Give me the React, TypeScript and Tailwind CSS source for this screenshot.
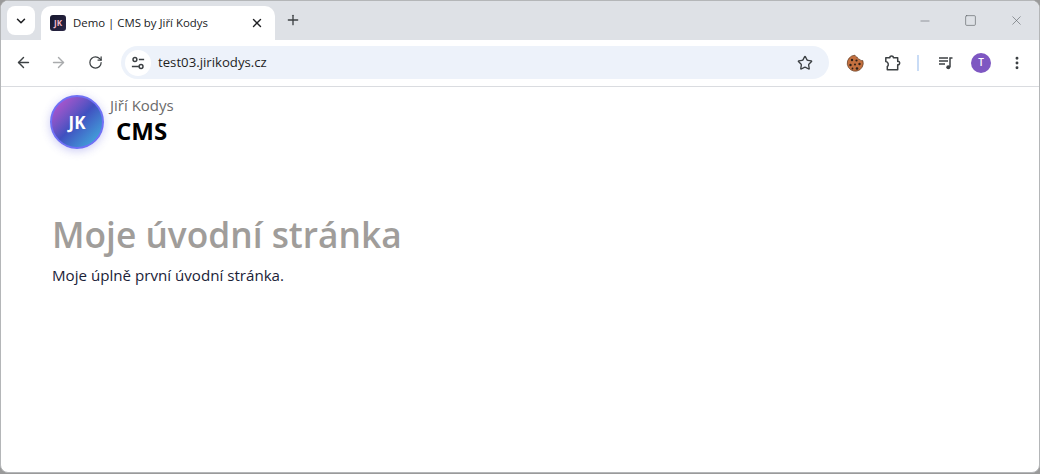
import { ArrowLeft, ArrowRight, RotateCw, ChevronDown, X, Plus, Minus, Square, Star, MoreVertical } from 'lucide-react';

const ui = { fontFamily: '"Open Sans", "Noto Sans", sans-serif' };

const SiteInfoIcon = () => (
  <svg width="14" height="14" viewBox="0 0 16 16" fill="none" stroke="#3c4043" strokeWidth="1.7">
    <circle cx="4.5" cy="4" r="2.200" />
    <path d="M9 4h6" />
    <circle cx="11.500" cy="12" r="2.200" />
    <path d="M1 12h8" />
  </svg>
);

const CookieIcon = () => (
  <svg width="18" height="18" viewBox="0 0 18 18">
    <path d="M9 1.2c.4 1.300 1.300 1.900 2.300 2 .2 1.300 1.200 2.200 2.500 2.200.5 1 1.400 1.300 3 1.200A8 8 0 1 1 9 1.200z" fill="#c4703f" stroke="#5f3a20" strokeWidth="0.7" />
    <circle cx="6" cy="6" r="1.200" fill="#2e2018" />
    <circle cx="10.500" cy="6.500" r="1.100" fill="#2e2018" />
    <circle cx="4.500" cy="11" r="1.200" fill="#2e2018" />
    <circle cx="9" cy="10.500" r="1" fill="#2e2018" />
    <circle cx="13.500" cy="10" r="1.200" fill="#2e2018" />
    <circle cx="11" cy="14.500" r="1.300" fill="#2e2018" />
    <circle cx="6.500" cy="14.500" r="0.900" fill="#2e2018" />
  </svg>
);

const ExtensionIcon = () => (
  <svg width="18" height="18" viewBox="0 0 18 18" fill="none" stroke="#3c4043" strokeWidth="1.500" strokeLinejoin="round">
    <path d="M1.800 3.700h4.100c-.3-2.300 3.700-2.300 3.400 0h4.400v3.700c2.600-.4 2.600 3.800 0 3.400v5H3.300v-3.300c1.500-.8 1.500-4.600-1.500-5.100z" />
  </svg>
);

const MediaIcon = () => (
  <svg width="16" height="16" viewBox="0 0 16 16" fill="none" stroke="#3c4043" strokeWidth="1.300">
    <path d="M2 3h9M2 6h9M2 9h6" />
    <path d="M13 12V3h2.500" strokeWidth="1.500" />
    <circle cx="11.300" cy="12.300" r="2" fill="#3c4043" stroke="none" />
  </svg>
);

export default function App() {
  return (
    <div className="h-[474px] w-[1040px] overflow-hidden bg-[#9a9a9a]" style={ui}>
      <div className="flex h-[473px] w-full flex-col overflow-hidden rounded-[8px] border border-[#b4b6b8] bg-white">
        {/* Tab strip */}
        <div className="flex h-[39px] shrink-0 items-end bg-[#dee1e6] pl-[6px]">
          <div className="mb-[5px] flex h-[29px] w-[28px] items-center justify-center rounded-[8px] bg-white">
            <ChevronDown size={14} strokeWidth={2.6} color="#202124" />
          </div>
          <div className="ml-[6px] flex h-[34px] w-[234px] items-center rounded-t-[10px] bg-white pl-[9px] pr-[11px]">
            <div className="flex h-[16px] w-[16px] items-center justify-center rounded-[3px] bg-gradient-to-br from-[#17172e] to-[#2b2746] text-[8px] font-bold leading-none text-[#f4b8c8]">
              JK
            </div>
            <span className="ml-[7px] flex-1 whitespace-nowrap text-[11.4px] text-[#202124]">Demo | CMS by Jiří Kodys</span>
            <X size={14} strokeWidth={2.4} color="#202124" />
          </div>
          <div className="mb-[10px] ml-[8px] flex h-[20px] w-[20px] items-center justify-center">
            <Plus size={16} strokeWidth={2} color="#3c4043" />
          </div>
          <div className="mb-[12px] ml-auto flex items-center gap-[32px] pr-[15px]">
            <Minus size={14} strokeWidth={1} color="#5f6368" />
            <Square size={13} strokeWidth={1.2} color="#5f6368" />
            <X size={15} strokeWidth={1} color="#5f6368" />
          </div>
        </div>
        {/* Toolbar */}
        <div className="flex h-[47px] shrink-0 items-center border-b border-[#dadce0] pb-[1px] pl-[14px] pr-[14px]">
          <ArrowLeft size={17} strokeWidth={2} color="#3c4043" />
          <ArrowRight size={17} strokeWidth={2} color="#a9abad" className="ml-[18px]" />
          <RotateCw size={15} strokeWidth={2} color="#3c4043" className="ml-[21px]" />
          <div className="ml-[18px] flex h-[33px] w-[708px] items-center rounded-full bg-[#edf2fa] pl-[4px] pr-[16px]">
            <div className="flex h-[26px] w-[26px] items-center justify-center rounded-full bg-white">
              <SiteInfoIcon />
            </div>
            <span className="ml-[7px] flex-1 text-[13.2px] text-[#1f1f1f]">test03.jirikodys.cz</span>
            <Star size={16} strokeWidth={2} color="#3c4043" />
          </div>
          <div className="ml-[17px]"><CookieIcon /></div>
          <div className="ml-[20px]"><ExtensionIcon /></div>
          <div className="ml-[15px] h-[16px] w-[2px] bg-[#c9dcf6]" />
          <div className="ml-[18px]"><MediaIcon /></div>
          <div className="ml-[18px] flex h-[20px] w-[20px] items-center justify-center rounded-full bg-[#7e57c2] text-[10px] font-semibold text-white">T</div>
          <MoreVertical size={16} strokeWidth={2.4} color="#3c4043" className="ml-[18px]" />
        </div>
        {/* Page */}
        <div className="flex-1 pl-[49px] pt-[8px]">
          <header className="flex items-start">
            <div className="flex h-[54px] w-[54px] items-center justify-center rounded-full border-2 border-[#6f70f5] bg-gradient-to-br from-[#c850d0] via-[#4050c0] to-[#40b8e0] pt-[1px] text-[17px] font-bold text-white shadow-[0_2px_10px_rgba(80,80,220,0.3)]">
              JK
            </div>
            <div className="ml-[6px] flex flex-col">
              <span className="text-[15px] leading-[20px] text-[#6b6b6b]">Jiří Kodys</span>
              <span className="ml-[6px] mt-[1px] text-[24px] font-bold leading-[30px] text-black">CMS</span>
            </div>
          </header>
          <main className="pl-[2px] pt-[61px]">
            <h1 className="text-[35.3px] font-semibold leading-[48px] text-[#a09d9a]">Moje úvodní stránka</h1>
            <p className="mt-[6px] text-[15.13px] leading-[22px] text-[#1a2238]">Moje úplně první úvodní stránka.</p>
          </main>
        </div>
      </div>
    </div>
  );
}
